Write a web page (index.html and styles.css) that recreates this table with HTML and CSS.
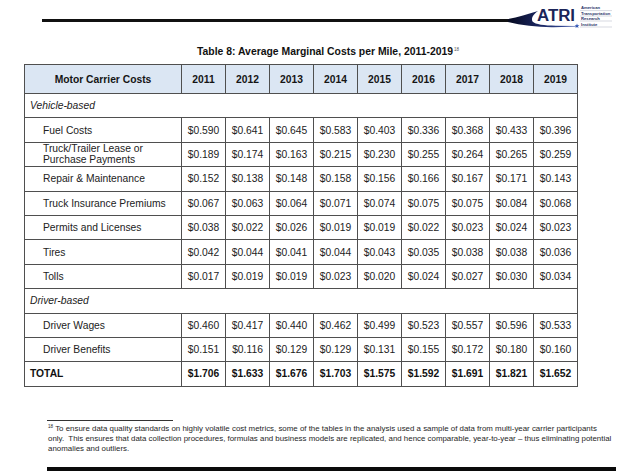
FILE: index.html
```html
<!DOCTYPE html>
<html lang="en">
<head>
<meta charset="utf-8">
<title>Table 8: Average Marginal Costs per Mile</title>
<link rel="stylesheet" href="styles.css">
</head>
<body>
<div class="page">
  <header class="top">
    <div class="rule"></div>
    <svg class="logo" width="110" height="30" viewBox="0 0 110 30" aria-label="ATRI American Transportation Research Institute">
      <defs>
        <linearGradient id="sw" x1="0" y1="0" x2="1" y2="0">
          <stop offset="0" stop-color="#05091f"/>
          <stop offset="0.45" stop-color="#1a2660"/>
          <stop offset="1" stop-color="#3c55a8"/>
        </linearGradient>
      </defs>
      <path d="M0,17 C10,15.5 20,12 30,9 C25,12.5 23,16 24.5,19.5 C27.5,22.5 36,23.6 48,23.7 L68,23.9 L68,24.5 L46,25.2 C30,25.4 14,23.4 0,20 Z" fill="url(#sw)"/>
      <text class="atri" x="29" y="19" textLength="38" lengthAdjust="spacingAndGlyphs">ATRI</text>
      <polygon class="star" points="69,21.4 69.62,23.15 71.47,23.2 70,24.32 70.53,26.1 69,25.05 67.47,26.1 68,24.32 66.53,23.2 68.38,23.15"/>
      <text class="sub" x="73" y="7">American</text>
      <text class="sub" x="73" y="12.5">Transportation</text>
      <text class="sub" x="73" y="17.5">Research</text>
      <text class="sub" x="73" y="23.5">Institute</text>
      <path class="subline" d="M72,8.6 H104 M72,14 H104 M72,19 H104 M72,25 H104"/>
    </svg>
  </header>

  <h1 class="title">Table 8: Average Marginal Costs per Mile, 2011-2019<sup>18</sup></h1>

  <table class="costs">
    <colgroup>
      <col class="c-label">
      <col class="c-year"><col class="c-year"><col class="c-year">
      <col class="c-year"><col class="c-year"><col class="c-year">
      <col class="c-year"><col class="c-year"><col class="c-year">
    </colgroup>
    <thead>
      <tr>
        <th>Motor Carrier Costs</th>
        <th>2011</th><th>2012</th><th>2013</th><th>2014</th><th>2015</th><th>2016</th><th>2017</th><th>2018</th><th>2019</th>
      </tr>
    </thead>
    <tbody>
      <tr class="group"><td colspan="10">Vehicle-based</td></tr>
      <tr><td class="item">Fuel Costs</td><td>$0.590</td><td>$0.641</td><td>$0.645</td><td>$0.583</td><td>$0.403</td><td>$0.336</td><td>$0.368</td><td>$0.433</td><td>$0.396</td></tr>
      <tr><td class="item two">Truck/Trailer Lease or<br>Purchase Payments</td><td>$0.189</td><td>$0.174</td><td>$0.163</td><td>$0.215</td><td>$0.230</td><td>$0.255</td><td>$0.264</td><td>$0.265</td><td>$0.259</td></tr>
      <tr><td class="item">Repair &amp; Maintenance</td><td>$0.152</td><td>$0.138</td><td>$0.148</td><td>$0.158</td><td>$0.156</td><td>$0.166</td><td>$0.167</td><td>$0.171</td><td>$0.143</td></tr>
      <tr><td class="item">Truck Insurance Premiums</td><td>$0.067</td><td>$0.063</td><td>$0.064</td><td>$0.071</td><td>$0.074</td><td>$0.075</td><td>$0.075</td><td>$0.084</td><td>$0.068</td></tr>
      <tr><td class="item">Permits and Licenses</td><td>$0.038</td><td>$0.022</td><td>$0.026</td><td>$0.019</td><td>$0.019</td><td>$0.022</td><td>$0.023</td><td>$0.024</td><td>$0.023</td></tr>
      <tr><td class="item">Tires</td><td>$0.042</td><td>$0.044</td><td>$0.041</td><td>$0.044</td><td>$0.043</td><td>$0.035</td><td>$0.038</td><td>$0.038</td><td>$0.036</td></tr>
      <tr><td class="item">Tolls</td><td>$0.017</td><td>$0.019</td><td>$0.019</td><td>$0.023</td><td>$0.020</td><td>$0.024</td><td>$0.027</td><td>$0.030</td><td>$0.034</td></tr>
      <tr class="group"><td colspan="10">Driver-based</td></tr>
      <tr><td class="item">Driver Wages</td><td>$0.460</td><td>$0.417</td><td>$0.440</td><td>$0.462</td><td>$0.499</td><td>$0.523</td><td>$0.557</td><td>$0.596</td><td>$0.533</td></tr>
      <tr><td class="item">Driver Benefits</td><td>$0.151</td><td>$0.116</td><td>$0.129</td><td>$0.129</td><td>$0.131</td><td>$0.155</td><td>$0.172</td><td>$0.180</td><td>$0.160</td></tr>
      <tr class="total"><td class="label">TOTAL</td><td>$1.706</td><td>$1.633</td><td>$1.676</td><td>$1.703</td><td>$1.575</td><td>$1.592</td><td>$1.691</td><td>$1.821</td><td>$1.652</td></tr>
    </tbody>
  </table>

  <div class="footnote">
    <div class="fn-rule"></div>
    <p class="fn-text"><sup>18</sup> To ensure data quality standards on highly volatile cost metrics, some of the tables in the analysis used a sample of data from multi-year carrier participants<br>only.&nbsp; This ensures that data collection procedures, formulas and business models are replicated, and hence comparable, year-to-year – thus eliminating potential<br>anomalies and outliers.</p>
  </div>

  <div class="bottom-bar"></div>
</div>
</body>
</html>
```

FILE: styles.css
```css
html, body {
  margin: 0;
  padding: 0;
  background: #ffffff;
}

.page {
  width: 624px;
  height: 475px;
  overflow: hidden;
  font-family: "Liberation Sans", Arial, sans-serif;
  color: #1e1e1e;
}

/* top rule + logo */
.top {
  display: flex;
  align-items: flex-start;
  height: 30px;
  padding: 2px 6px 0 42px;
  box-sizing: border-box;
}

.rule {
  flex: 1;
  height: 3px;
  margin-top: 17px;
  background: #111111;
}

.logo {
  display: block;
  flex: none;
}

.logo .atri {
  font-family: "Liberation Sans", Arial, sans-serif;
  font-weight: bold;
  font-size: 16px;
  fill: #1b2559;
}

.logo .star {
  fill: #2f55b5;
}

.logo .sub {
  font-family: "Liberation Sans", Arial, sans-serif;
  font-weight: bold;
  font-size: 4.2px;
  fill: #2a3468;
}

.logo .subline {
  stroke: #9aa0b4;
  stroke-width: 0.4;
  fill: none;
}

/* title */
.title {
  margin: 14px 0 0 197px;
  font-size: 10.4px;
  line-height: 12px;
  font-weight: bold;
  color: #111111;
  white-space: nowrap;
}

.title sup {
  font-size: 4.5px;
  font-weight: normal;
  vertical-align: 4px;
  margin-left: 1px;
  color: #555555;
}

/* table */
.costs {
  margin: 6px 0 0 24px;
  width: 553px;
  table-layout: fixed;
  border-collapse: collapse;
  font-size: 10.3px;
  color: #222222;
}

.c-label { width: 157px; }
.c-year { width: 44px; }

.costs th,
.costs td {
  border: 1px solid #4f4f4f;
  padding: 0;
  text-align: center;
  white-space: nowrap;
}

.costs thead tr {
  height: 29px;
}

.costs th {
  background: #dbe6f3;
  font-weight: bold;
  font-size: 10.3px;
  color: #151515;
}

.costs tbody tr {
  height: 24.4px;
}

.costs td.item {
  text-align: left;
  padding-left: 18px;
}

.costs td.two {
  line-height: 11.5px;
}

.costs tr.group td {
  text-align: left;
  padding-left: 5px;
  font-style: italic;
}

.costs tr.total td {
  font-weight: bold;
  color: #111111;
}

.costs tr.total td.label {
  text-align: left;
  padding-left: 5px;
}

/* footnote */
.footnote {
  margin: 33px 0 0 47px;
}

.fn-rule {
  width: 126px;
  height: 1px;
  background: #333333;
}

.fn-text {
  margin: 3px 0 0 1px;
  font-size: 7.9px;
  line-height: 10px;
  color: #262626;
  white-space: nowrap;
}

.fn-text sup {
  font-size: 4.6px;
  vertical-align: 3px;
  line-height: 0;
}

.bottom-bar {
  margin: 13px 8px 0 47px;
  height: 4px;
  background: #0a0a0a;
}
```
